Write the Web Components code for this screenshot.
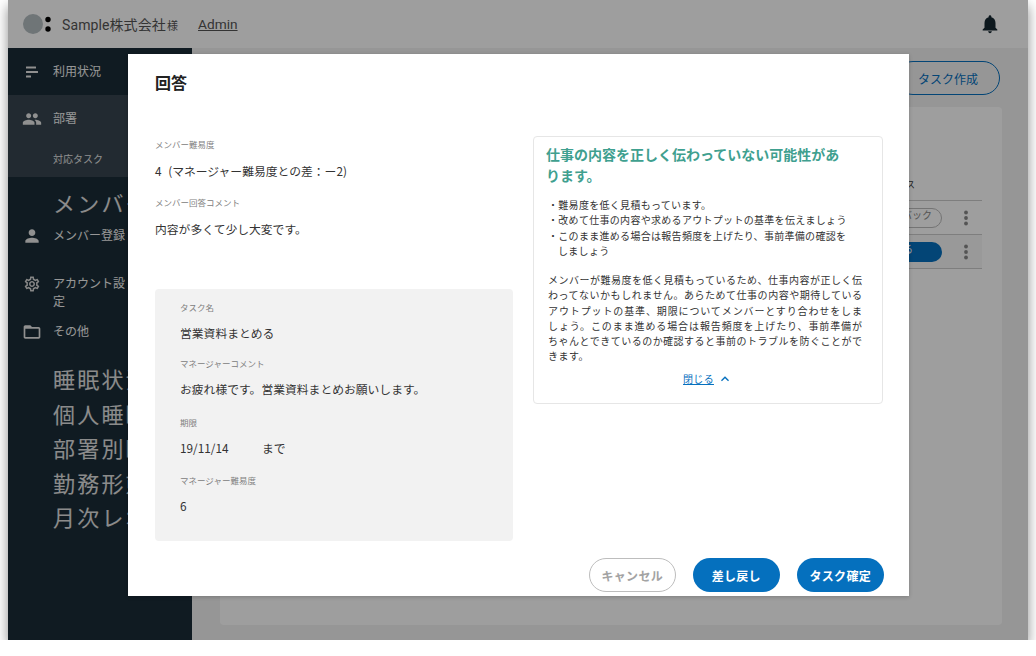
<!DOCTYPE html>
<html lang="ja">
<head>
<meta charset="utf-8">
<title>回答</title>
<style>
  html, body { margin: 0; background: #fff; }
  body { font-family: Roboto, "Noto Sans CJK JP", sans-serif; color: #222; }
</style>
</head>
<body>
<app-shell>
  <app-header slot="header"></app-header>
  <side-nav slot="nav">
    <nav-item icon="bars" height="47">利用状況</nav-item>
    <nav-group>
      <nav-item icon="people" height="48">部署</nav-item>
      <nav-sub>対応タスク</nav-sub>
    </nav-group>
    <nav-big style="margin-top:11px">メンバー</nav-big>
    <nav-item icon="person" height="24" style="margin-top:1.5px">メンバー登録</nav-item>
    <nav-item icon="gear" height="36" style="margin-top:27px">アカウント設定</nav-item>
    <nav-item icon="folder" height="24" style="margin-top:9px">その他</nav-item>
    <nav-big style="margin-top:20.25px">睡眠状況</nav-big>
    <nav-big>個人睡眠</nav-big>
    <nav-big>部署別睡眠</nav-big>
    <nav-big>勤務形態</nav-big>
    <nav-big>月次レポ</nav-big>
  </side-nav>
  <task-pane slot="main"></task-pane>
  <answer-modal slot="overlay">
    <span slot="title">回答</span>
    <field-block slot="left" label="メンバー難易度" style="margin-bottom:17px;--gap:13px;word-spacing:4px">4 (マネージャー難易度との差：ー2)</field-block>
    <field-block slot="left" label="メンバー回答コメント" style="--gap:13px">内容が多くて少し大変です。</field-block>
    <task-summary slot="left">
      <field-block label="タスク名" style="margin-bottom:16px">営業資料まとめる</field-block>
      <field-block label="マネージャーコメント" style="margin-bottom:19px">お疲れ様です。営業資料まとめお願いします。</field-block>
      <field-block label="期限" style="margin-bottom:18px"><span style="display:inline-block;width:82px">19/11/14</span>まで</field-block>
      <field-block label="マネージャー難易度">6</field-block>
    </task-summary>
    <advice-panel slot="right"></advice-panel>
    <pill-button slot="actions" kind="ghost">キャンセル</pill-button>
    <pill-button slot="actions">差し戻し</pill-button>
    <pill-button slot="actions">タスク確定</pill-button>
  </answer-modal>
</app-shell>

<script>
const ICONS = {
  bars: '<rect x="4.8" y="5.4" width="12" height="2.4" rx=".4"/><rect x="4.8" y="10.8" width="14.4" height="2.4" rx=".4"/><rect x="4.8" y="16.2" width="6" height="2.4" rx=".4"/>',
  people: '<path d="M16 11c1.66 0 2.99-1.34 2.99-3S17.66 5 16 5c-1.66 0-3 1.34-3 3s1.34 3 3 3zm-8 0c1.66 0 2.99-1.34 2.99-3S9.66 5 8 5C6.34 5 5 6.34 5 8s1.34 3 3 3zm0 2c-2.33 0-7 1.17-7 3.5V19h14v-2.5c0-2.33-4.67-3.5-7-3.5zm8 0c-.29 0-.62.02-.97.05 1.16.84 1.97 1.97 1.97 3.45V19h6v-2.5c0-2.33-4.67-3.5-7-3.5z"/>',
  person: '<path d="M12 12c2.21 0 4-1.79 4-4s-1.79-4-4-4-4 1.79-4 4 1.79 4 4 4zm0 2c-2.67 0-8 1.34-8 4v2h16v-2c0-2.66-5.33-4-8-4z"/>',
  gear: '<path d="M19.43 12.98c.04-.32.07-.64.07-.98 0-.34-.03-.66-.07-.98l2.11-1.65c.19-.15.24-.42.12-.64l-2-3.46c-.09-.16-.26-.25-.44-.25-.06 0-.12.01-.17.03l-2.49 1c-.52-.4-1.08-.73-1.69-.98l-.38-2.65C14.46 2.18 14.25 2 14 2h-4c-.25 0-.46.18-.49.42l-.38 2.65c-.61.25-1.17.59-1.69.98l-2.49-1c-.06-.02-.12-.03-.18-.03-.17 0-.34.09-.43.25l-2 3.46c-.13.22-.07.49.12.64l2.11 1.65c-.04.32-.07.65-.07.98 0 .33.03.66.07.98l-2.11 1.65c-.19.15-.24.42-.12.64l2 3.46c.09.16.26.25.44.25.06 0 .12-.01.17-.03l2.49-1c.52.4 1.08.73 1.69.98l.38 2.65c.03.24.24.42.49.42h4c.25 0 .46-.18.49-.42l.38-2.65c.61-.25 1.17-.59 1.69-.98l2.49 1c.06.02.12.03.18.03.17 0 .34-.09.43-.25l2-3.46c.12-.22.07-.49-.12-.64l-2.11-1.65zm-1.98-1.71c.04.31.05.52.05.73 0 .21-.02.43-.05.73l-.14 1.13.89.7 1.08.84-.7 1.21-1.27-.51-1.04-.42-.9.68c-.43.32-.84.56-1.25.73l-1.06.43-.16 1.13-.2 1.35h-1.4l-.19-1.35-.16-1.13-1.06-.43c-.43-.18-.83-.41-1.23-.71l-.91-.7-1.06.43-1.27.51-.7-1.21 1.08-.84.89-.7-.14-1.13c-.03-.31-.05-.54-.05-.74s.02-.43.05-.73l.14-1.13-.89-.7-1.08-.84.7-1.21 1.27.51 1.04.42.9-.68c.43-.32.84-.56 1.25-.73l1.06-.43.16-1.13.2-1.35h1.39l.19 1.35.16 1.13 1.06.43c.43.18.83.41 1.23.71l.91.7 1.06-.43 1.27-.51.7 1.21-1.07.85-.89.7.14 1.13zM12 8c-2.21 0-4 1.79-4 4s1.79 4 4 4 4-1.79 4-4-1.79-4-4-4zm0 6c-1.1 0-2-.9-2-2s.9-2 2-2 2 .9 2 2-.9 2-2 2z"/>',
  folder: '<path d="M20 6h-8l-2-2H4c-1.1 0-1.99.9-1.99 2L2 18c0 1.1.9 2 2 2h16c1.1 0 2-.9 2-2V8c0-1.1-.9-2-2-2zm0 12H4V8h16v10z"/>',
  bell: '<path d="M12 22c1.1 0 2-.9 2-2h-4c0 1.1.89 2 2 2zm6-6v-5c0-3.07-1.64-5.64-4.5-6.32V4c0-.83-.67-1.5-1.5-1.5s-1.5.67-1.5 1.5v.68C7.63 5.36 6 7.92 6 11v5l-2 2v1h16v-1l-2-2z"/>',
  chevron: '<path d="M7.41 15.41L12 10.83l4.59 4.58L18 14l-6-6-6 6z"/>'
};

// small helper so every class below stays short
function shadow(el, html) {
  el.attachShadow({ mode: 'open' }).innerHTML = html;
}

class AppShell extends HTMLElement {
  constructor() {
    super();
    shadow(this, `
      <style>
        :host { display: block; position: relative; width: 1020px; height: 640px; margin: 0 8px;
                box-shadow: 0 6px 12px rgba(0,0,0,.45); background: #f3f3f3; }
        .body { display: flex; height: 592px; }
        .scrim { position: absolute; inset: 0; background: rgba(0,0,0,.38); overflow: hidden;
                 display: flex; padding: 54px 119px 44px 120px; box-sizing: border-box; }
      </style>
      <slot name="header"></slot>
      <div class="body"><slot name="nav"></slot><slot name="main"></slot></div>
      <div class="scrim"><slot name="overlay"></slot></div>
    `);
  }
}

class AppHeader extends HTMLElement {
  constructor() {
    super();
    shadow(this, `
      <style>
        :host { display: flex; align-items: center; height: 48px; background: #fff; padding: 0 27px 0 15px;
                font-size: 14px; color: #555; box-sizing: border-box; }
        .logo { width: 30px; height: 20px; margin-right: 9px; flex: none; }
        small { font-size: 11px; margin-left: 1px; }
        span { letter-spacing: .1px; }
        a { margin-left: 20px; font-size: 13.7px; color: inherit; text-decoration: underline; }
        svg.bell { width: 22px; height: 22px; margin-left: auto; fill: #152731; }
      </style>
      <svg class="logo" viewBox="0 0 30 20"><circle cx="10" cy="10" r="10" fill="#b4bdc1"/><circle cx="25" cy="5.5" r="2.7" fill="#000"/><circle cx="25" cy="15" r="2.7" fill="#000"/></svg>
      <span>Sample株式会社<small>様</small></span>
      <a>Admin</a>
      <svg class="bell" viewBox="0 0 24 24">${ICONS.bell}</svg>
    `);
  }
}

class SideNav extends HTMLElement {
  constructor() {
    super();
    shadow(this, `
      <style>
        :host { display: block; width: 184px; flex: none; height: 100%; background: #1b2d37; color: #fff; overflow: hidden; }
      </style>
      <slot></slot>
    `);
  }
}

class NavItem extends HTMLElement {
  constructor() {
    super();
    const icon = this.getAttribute('icon');
    const h = this.getAttribute('height') || 48;
    const small = icon === 'gear';
    shadow(this, `
      <style>
        :host { display: flex; align-items: center; gap: 11px; min-height: ${h}px; padding-left: 14px;
                font-size: 12px; line-height: 18px; color: #f4f4f4; }
        svg { width: 20px; height: 20px; flex: none; fill: #e8e8e8; }
        svg.sm { width: 18px; height: 18px; margin: 0 1px; align-self: flex-start; fill: #d8d8d8; }
        .t { width: 72px; flex: none; }
      </style>
      <svg class="${small ? 'sm' : ''}" viewBox="0 0 24 24">${ICONS[icon]}</svg>
      <span class="t"><slot></slot></span>
    `);
  }
}

class NavGroup extends HTMLElement {
  constructor() {
    super();
    shadow(this, `
      <style>:host { display: block; background: #37454f; height: 82px; }</style>
      <slot></slot>
    `);
  }
}

class NavSub extends HTMLElement {
  constructor() {
    super();
    shadow(this, `
      <style>:host { display: block; padding: 9px 0 0 45px; font-size: 10px; line-height: 16px; color: #e8e8e8; }</style>
      <slot></slot>
    `);
  }
}

class NavBig extends HTMLElement {
  constructor() {
    super();
    shadow(this, `
      <style>:host { display: block; padding-left: 45px; font-size: 22px; line-height: 34.5px; letter-spacing: 2.2px;
                     font-weight: 400; color: #e0e0e0; white-space: nowrap; }</style>
      <slot></slot>
    `);
  }
}

class TaskPane extends HTMLElement {
  constructor() {
    super();
    const dots = '<div class="dots"><svg viewBox="0 0 6 16"><circle cx="3" cy="2.5" r="1.9"/><circle cx="3" cy="8" r="1.9"/><circle cx="3" cy="13.5" r="1.9"/></svg></div>';
    shadow(this, `
      <style>
        :host { display: flex; flex-direction: column; flex: 1; min-width: 0; padding: 13px 26px 15px 28px;
                box-sizing: border-box; height: 100%; background: #f3f3f3; font-size: 11px; color: #333; }
        .new { align-self: flex-end; margin-right: 2px; width: 104px; height: 34px; box-sizing: border-box; border: 1px solid #0570be;
               border-radius: 17px; color: #0570be; font-size: 12px; display: flex; align-items: center;
               justify-content: flex-end; padding-right: 21px; }
        .card { flex: 1; margin-top: 12px; background: #fff; border-radius: 4px; padding: 69px 20px 0 20px; }
        .head { height: 25px; font-size: 9px; line-height: 19px; padding-left: 630px; border-bottom: 1px solid #ccc; box-sizing: border-box; }
        .row { display: flex; align-items: center; justify-content: flex-end; height: 34px; border-bottom: 1px solid #ccc; box-sizing: border-box; }
        .row.on { background: #f7f7f7; }
        .pill { width: 90px; height: 20px; border-radius: 10px; box-sizing: border-box; font-size: 10px;
                display: flex; align-items: center; justify-content: flex-end; padding-bottom: 7px; }
        .pill.out { border: 1px solid #bbb; color: #888; padding-right: 9px; }
        .pill.blue { background: #0570be; color: #fff; padding-right: 29px; }
        .dots { width: 40px; padding-left: 8px; box-sizing: border-box; display: flex; justify-content: center; }
        .dots svg { width: 6px; height: 16px; fill: #888; }
      </style>
      <div class="new">タスク作成</div>
      <div class="card">
        <div class="head">ステータス</div>
        <div class="row"><div class="pill out">フィードバック</div>${dots}</div>
        <div class="row on"><div class="pill blue">確認する</div>${dots}</div>
      </div>
    `);
  }
}

class AnswerModal extends HTMLElement {
  constructor() {
    super();
    shadow(this, `
      <style>
        :host { display: flex; flex-direction: column; width: 781px; height: 542px; background: #fff; box-sizing: border-box;
                padding: 18px 25px 4px 27px; box-shadow: 0 1px 4px rgba(0,0,0,.2); font-family: "Noto Sans CJK JP", sans-serif; }
        h2 { margin: 0 0 44px; font-size: 16px; line-height: 20px; font-weight: 700; color: #222; }
        .cols { display: grid; grid-template-columns: 358px 350px; gap: 20px; flex: none; height: 404px; }
        .left { display: flex; flex-direction: column; padding-top: 2px; }
        .actions { display: flex; justify-content: flex-end; gap: 16.5px; margin-top: 18px; }
      </style>
      <h2><slot name="title"></slot></h2>
      <div class="cols">
        <div class="left"><slot name="left"></slot></div>
        <div><slot name="right"></slot></div>
      </div>
      <div class="actions"><slot name="actions"></slot></div>
    `);
  }
}

class FieldBlock extends HTMLElement {
  constructor() {
    super();
    shadow(this, `
      <style>
        :host { display: block; }
        .l { font-size: 8.5px; line-height: 12px; color: #808080; margin-bottom: var(--gap, 12px); }
        .v { font-size: 11.8px; line-height: 16px; color: #333; }
      </style>
      <div class="l">${this.getAttribute('label')}</div>
      <div class="v"><slot></slot></div>
    `);
  }
}

class TaskSummary extends HTMLElement {
  constructor() {
    super();
    shadow(this, `
      <style>
        :host { display: block; margin-top: 52px; width: 358px; height: 252px; box-sizing: border-box;
                background: #f2f2f2; border-radius: 4px; padding: 12px 25px 0; }
      </style>
      <slot></slot>
    `);
  }
}

class AdvicePanel extends HTMLElement {
  constructor() {
    super();
    // paragraph is laid out line by line, justified to the box like the original
    const lines = [
      'メンバーが難易度を低く見積もっているため、仕事内容が正しく伝',
      'わってないかもしれません。あらためて仕事の内容や期待している',
      'アウトプットの基準、期限についてメンバーとすり合わせをしま',
      'しょう。このまま進める場合は報告頻度を上げたり、事前準備が',
      'ちゃんとできているのか確認すると事前のトラブルを防ぐことがで'
    ];
    shadow(this, `
      <style>
        :host { display: block; width: 350px; height: 268px; box-sizing: border-box; border: 1px solid #e6e6e6;
                border-radius: 4px; padding: 7px 0 0 12px; }
        h3 { margin: 0 0 11px; width: 300px; font-size: 14px; line-height: 21px; font-weight: 700; color: #3fa08f; }
        ul { list-style: none; margin: 0 0 14px 2px; padding: 0; width: 300px; font-size: 10px; line-height: 15.3px; letter-spacing: .3px; color: #333; }
        li { padding-left: 10px; text-indent: -10px; }
        p { margin: 0 0 8px 2px; width: 314px; font-size: 10px; line-height: 15.2px; color: #333; }
        p span { display: block; text-align: justify; text-align-last: justify; text-justify: inter-character; white-space: nowrap; }
        p span.end { text-align-last: left; letter-spacing: .47px; }
        .close { display: flex; justify-content: center; align-items: center; gap: 3px; margin-left: -12px; font-size: 10px; line-height: 16px; color: #0570be; }
        .close a { text-decoration: underline; letter-spacing: .3px; }
        .close svg { width: 16px; height: 16px; fill: #0570be; }
      </style>
      <h3>仕事の内容を正しく伝わっていない可能性があります。</h3>
      <ul>
        <li>・難易度を低く見積もっています。</li>
        <li>・改めて仕事の内容や求めるアウトプットの基準を伝えましょう</li>
        <li>・このまま進める場合は報告頻度を上げたり、事前準備の確認をしましょう</li>
      </ul>
      <p>${lines.map(l => `<span>${l}</span>`).join('')}<span class="end">きます。</span></p>
      <div class="close"><a>閉じる</a><svg viewBox="0 0 24 24">${ICONS.chevron}</svg></div>
    `);
  }
}

class PillButton extends HTMLElement {
  constructor() {
    super();
    const ghost = this.getAttribute('kind') === 'ghost';
    shadow(this, `
      <style>
        :host { display: flex; align-items: center; justify-content: center; width: 87.5px; height: 34px; box-sizing: border-box;
                border-radius: 17px; font-size: 12px; font-weight: 700; letter-spacing: .3px;
                ${ghost ? 'border: 1px solid #bdbdbd; color: #a3a3a3; background: #fff;' : 'background: #0570be; color: #fff;'} }
      </style>
      <slot></slot>
    `);
  }
}

customElements.define('app-shell', AppShell);
customElements.define('app-header', AppHeader);
customElements.define('side-nav', SideNav);
customElements.define('nav-item', NavItem);
customElements.define('nav-group', NavGroup);
customElements.define('nav-sub', NavSub);
customElements.define('nav-big', NavBig);
customElements.define('task-pane', TaskPane);
customElements.define('answer-modal', AnswerModal);
customElements.define('field-block', FieldBlock);
customElements.define('task-summary', TaskSummary);
customElements.define('advice-panel', AdvicePanel);
customElements.define('pill-button', PillButton);
</script>
</body>
</html>
